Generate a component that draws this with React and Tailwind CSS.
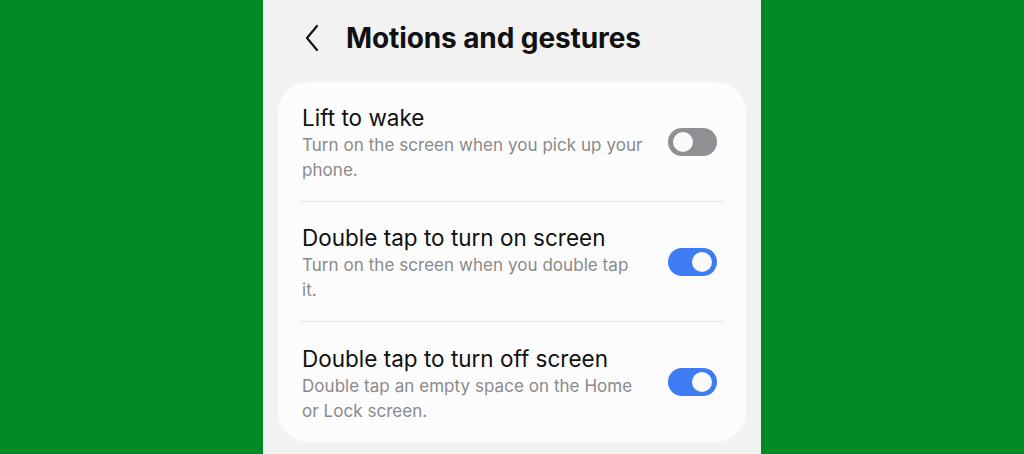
import { useState } from 'react'

const ITEMS = [
  { title: 'Lift to wake', desc: 'Turn on the screen when you pick up your phone.', on: false },
  { title: 'Double tap to turn on screen', desc: 'Turn on the screen when you double tap it.', on: true },
  { title: 'Double tap to turn off screen', desc: 'Double tap an empty space on the Home or Lock screen.', on: true },
]

function Toggle({ on, onClick }) {
  return (
    <button onClick={onClick}
      className={`w-[49px] h-[28px] rounded-full flex items-center px-[3px] shrink-0 ${on ? 'bg-[#3d7cf2] justify-end' : 'bg-[#8f8f94] justify-start'}`}>
      <span className={`w-[24px] h-[24px] rounded-full bg-[#fafafa] border-[2px] ${on ? 'border-[#3d7cf2]' : 'border-[#8f8f94]'}`} />
    </button>
  )
}

export default function App() {
  const [items, setItems] = useState(ITEMS)

  const toggle = (i) => setItems(items.map((it, j) => j === i ? { ...it, on: !it.on } : it))

  return (
    <div className="w-[1024px] h-[454px] bg-[#028b24] flex justify-center overflow-hidden"
      style={{ fontFamily: 'Inter, "Noto Sans", sans-serif' }}>
      <div className="w-[498px] h-full bg-[#f2f2f2] px-[15px]">
        <div className="h-[82px] flex items-center pl-[26px] pb-[6px]">
          <svg width="16" height="28" viewBox="0 0 16 28" className="mr-[26px]">
            <path d="M13 2 L3 14 L13 26" fill="none" stroke="#111" strokeWidth="2.2" strokeLinecap="round" strokeLinejoin="round" />
          </svg>
          <h1 className="text-[28px] font-bold text-[#111] tracking-[-0.1px]">Motions and gestures</h1>
        </div>
        <div className="bg-[#fcfcfc] rounded-[30px] px-[22px]">
          {items.map((it, i) => (
            <div key={i} className={`h-[120px] pt-[4px] flex items-center justify-between ${i < items.length - 1 ? 'border-b border-[#e3e3e3]' : ''}`}>
              <div className="w-[343px] pl-[2px]">
                <p className="text-[22.5px] leading-[28px] text-[#111]">{it.title}</p>
                <p className="text-[17px] leading-[25px] text-[#8a8a8a] mt-[1px] tracking-[0.05px]">{it.desc}</p>
              </div>
              <div className="pr-[7px] -mt-[4px]">
                <Toggle on={it.on} onClick={() => toggle(i)} />
              </div>
            </div>
          ))}
        </div>
      </div>
    </div>
  )
}
